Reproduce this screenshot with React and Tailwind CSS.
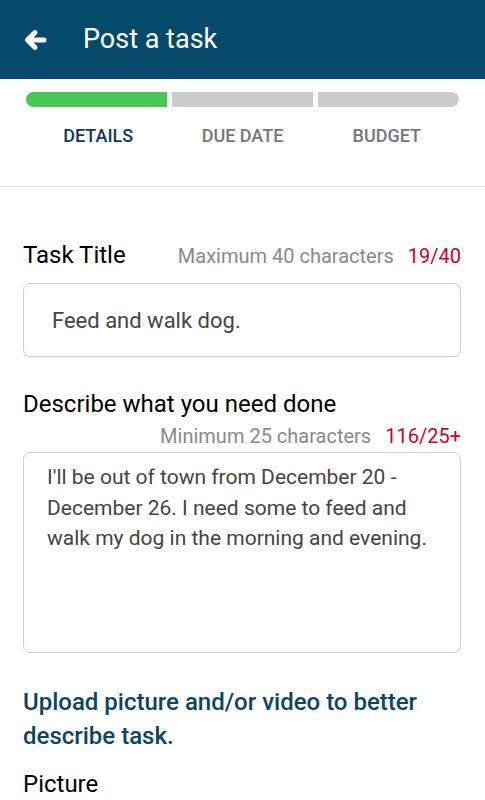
import React from "react";

export default function App() {
  return (
    <div className="w-[485px] h-[800px] overflow-hidden bg-white" style={{ fontFamily: "Roboto, 'Noto Sans', sans-serif" }}>
      <header className="h-[79px] bg-[#064a6b] flex items-center">
        <svg className="ml-[23px]" width="24" height="24" viewBox="0 0 24 24">
          <path d="M21 12H5M12 4.5L4.5 12L12 19.5" stroke="white" strokeWidth="5" strokeLinecap="round" strokeLinejoin="round" fill="none" />
        </svg>
        <h1 className="ml-[36px] text-white text-[27px] leading-none">Post a task</h1>
      </header>

      <div className="border-b border-[#d6dcdf]">
        <div className="px-[26px] pt-[13px] flex gap-[5px]">
          <div className="flex-1 h-[15px] bg-[#47c653] rounded-l-full" />
          <div className="flex-1 h-[15px] bg-[#cccccc]" />
          <div className="flex-1 h-[15px] bg-[#cccccc] rounded-r-full" />
        </div>
        <div className="px-[26px] flex h-[79px] pt-[20px]">
          <div className="flex-1 text-center text-[18px] font-medium text-[#0b3a5c] leading-none">DETAILS</div>
          <div className="flex-1 text-center text-[18px] font-medium text-[#777777] leading-none">DUE DATE</div>
          <div className="flex-1 text-center text-[18px] font-medium text-[#777777] leading-none">BUDGET</div>
        </div>
      </div>

      <div className="px-[23px] pr-[24px]">
        <div className="flex items-baseline justify-between mt-[56px]">
          <span className="text-[24px] text-black leading-none">Task Title</span>
          <span className="text-[20px] leading-none">
            <span className="text-[#8a8a8a]">Maximum 40 characters</span>
            <span className="text-[#d0021b] ml-[14px]">19/40</span>
          </span>
        </div>
        <div className="mt-[16px] h-[74px] border border-[#cfcfcf] rounded-[7px] flex items-center px-[28px] shadow-[0_1px_1px_rgba(0,0,0,0.05)]">
          <span className="text-[22px] text-[#444444]">Feed and walk dog.</span>
        </div>

        <div className="mt-[35px] text-[24px] text-black leading-none">Describe what you need done</div>
        <div className="mt-[10px] text-right text-[20px] leading-none">
          <span className="text-[#8a8a8a]">Minimum 25 characters</span>
          <span className="text-[#d0021b] ml-[14px]">116/25+</span>
        </div>
        <div className="mt-[6px] h-[201px] border border-[#cfcfcf] rounded-[7px] pl-[23px] pr-[20px] pt-[9px]">
          <p className="text-[21px] leading-[30.5px] text-[#444444]">
            I'll be out of town from December 20 - December 26. I need some to feed and walk my dog in the morning and evening.
          </p>
        </div>

        <p className="mt-[32px] text-[24px] leading-[34px] font-medium text-[#0a4566] pr-[20px]">
          Upload picture and/or video to better describe task.
        </p>
        <div className="mt-[19px] text-[24px] text-black leading-none">Picture</div>
      </div>
    </div>
  );
}
